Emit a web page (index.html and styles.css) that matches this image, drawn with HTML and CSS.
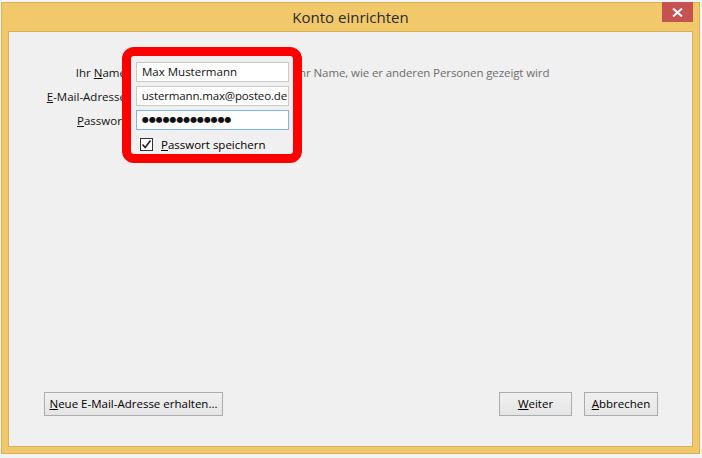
FILE: index.html
```html
<!DOCTYPE html>
<html lang="de">
<head>
<meta charset="utf-8">
<title>Konto einrichten</title>
<link rel="stylesheet" href="styles.css">
</head>
<body>
<div class="window">
  <div class="titlebar">
    <span class="spacer"></span>
    <span class="title">Konto einrichten</span>
    <span class="close"><svg width="11" height="9" viewBox="0 0 11 9"><path d="M1 0.5 L10 8.5 M10 0.5 L1 8.5" stroke="#fff" stroke-width="2"/></svg></span>
  </div>
  <div class="client">
    <div class="form">
      <label class="lbl">Ihr <u>N</u>ame:</label>
      <div class="field">Max Mustermann</div>
      <div class="hint">Ihr Name, wie er anderen Personen gezeigt wird</div>

      <label class="lbl"><u>E</u>-Mail-Adresse:</label>
      <div class="field field-scrolled"><span>ustermann.max@posteo.de</span></div>
      <div class="hint"></div>

      <label class="lbl"><u>P</u>asswort:</label>
      <div class="field field-focus dots">●●●●●●●●●●●●●</div>
      <div class="hint"></div>

      <div class="lbl"></div>
      <div class="check-row">
        <span class="checkbox"><svg width="11" height="11" viewBox="0 0 11 11"><path d="M1.5 5.5 L4.2 8.5 L9.5 1.5" stroke="#222" stroke-width="1.6" fill="none"/></svg></span>
        <span class="check-label"><u>P</u>asswort speichern</span>
      </div>
    </div>
    <div class="buttons">
      <button class="btn btn-new"><u>N</u>eue E-Mail-Adresse erhalten...</button>
      <div class="btn-group">
        <button class="btn btn-next"><u>W</u>eiter</button>
        <button class="btn btn-cancel"><u>A</u>bbrechen</button>
      </div>
    </div>
  </div>
</div>
<div class="highlight"></div>
</body>
</html>
```

FILE: styles.css
```css
html, body {
  margin: 0;
  padding: 0;
}
body {
  width: 702px;
  height: 458px;
  background: #f4f4f4;
  font-family: "Open Sans", "Noto Sans", "DejaVu Sans", sans-serif;
  font-size: 11.5px;
  color: #000;
  overflow: hidden;
  position: relative;
}
.window {
  margin: 2px 0 0 1px;
  width: 699px;
  height: 452px;
  box-sizing: border-box;
  background: #f1c96b;
  border: 1px solid #d8b359;
  display: flex;
  flex-direction: column;
  padding: 0 6px 6px 6px;
}
.titlebar {
  height: 28px;
  display: grid;
  grid-template-columns: 1fr auto 1fr;
  align-items: start;
}
.title {
  font-size: 15px;
  color: #2b2b2b;
  line-height: 28px;
}
.close {
  justify-self: end;
  width: 31px;
  height: 20px;
  margin-top: -1px;
  background: #c75050;
  display: flex;
  align-items: center;
  justify-content: center;
}
.close svg { display: block; }
.client {
  flex: 1;
  background: #f0f0f0;
  border: 1px solid #d6b15b;
  display: flex;
  flex-direction: column;
  justify-content: space-between;
}
.form {
  display: grid;
  grid-template-columns: 119px 161px auto;
  row-gap: 4px;
  padding-top: 30px;
  align-items: center;
}
.lbl {
  text-align: right;
  margin-right: -1px;
  white-space: nowrap;
  color: #111;
}
.field {
  margin-left: 8px;
  height: 20px;
  box-sizing: border-box;
  background: #fff;
  border: 1px solid #c8c8c8;
  padding: 0 0 0 5px;
  line-height: 18px;
  white-space: nowrap;
  overflow: hidden;
  color: #111;
}
.field-scrolled {
  display: flex;
  justify-content: flex-end;
  padding: 0 1px 0 3px;
  letter-spacing: -0.15px;
}
.field-scrolled span {
  flex: none;
}
.field-focus {
  border-color: #7eb4ea;
}
.dots {
  font-family: "DejaVu Sans", sans-serif;
  font-size: 8px;
  letter-spacing: -0.1px;
  padding-left: 5px;
}
.hint {
  padding-left: 7px;
  color: #6d6d6d;
  letter-spacing: -0.1px;
  white-space: nowrap;
}
.check-row {
  grid-column: 2 / span 2;
  display: flex;
  align-items: center;
  gap: 8px;
  padding-left: 12px;
  margin-top: 3px;
}
.checkbox {
  width: 13px;
  height: 13px;
  box-sizing: border-box;
  border: 1px solid #333;
  background: #fff;
  display: flex;
  align-items: center;
  justify-content: center;
}
.checkbox svg { display: block; }
.buttons {
  display: flex;
  justify-content: space-between;
  padding: 0 34px 30px 35px;
}
.btn-group {
  display: flex;
  gap: 12px;
}
.btn {
  font-family: inherit;
  font-size: 11.5px;
  color: #000;
  height: 24px;
  box-sizing: border-box;
  border: 1px solid #acacac;
  background: linear-gradient(#f0f0f0, #e5e5e5);
  padding: 0 0 2px 0;
  margin: 0;
}
.btn-new { width: 179px; }
.btn-next { width: 73px; }
.btn-cancel { width: 74px; }
.highlight {
  position: absolute;
  left: 122px;
  top: 47px;
  width: 180px;
  height: 116px;
  box-sizing: border-box;
  border: 9px solid #ff0000;
  border-radius: 12px;
}
```
